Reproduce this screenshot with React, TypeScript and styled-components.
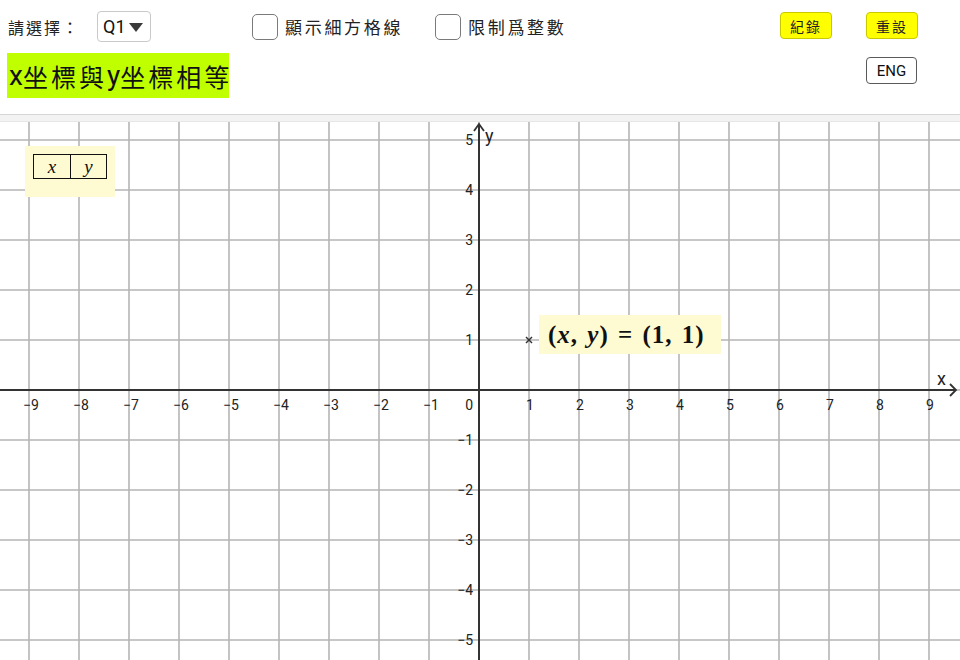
import React from "react";
import styled, { createGlobalStyle } from "styled-components";

const GlobalStyle = createGlobalStyle`
  html, body {
    margin: 0;
    padding: 0;
    background: #ffffff;
    overflow: hidden;
  }
  body {
    font-family: "Noto Sans CJK TC", "Noto Sans", sans-serif;
    color: #1a1a1a;
  }
`;

const CJK = `"Noto Sans CJK TC", "Noto Sans CJK SC", sans-serif`;
const LATIN = `Roboto, "Noto Sans", "Noto Sans CJK TC", sans-serif`;

const Page = styled.div`
  width: 960px;
  height: 660px;
  display: flex;
  flex-direction: column;
`;

const TopPanel = styled.div`
  height: 114px;
  box-sizing: border-box;
  padding-top: 11px;
  display: grid;
  grid-template-columns: 97px 155px 183px 345px 86px 1fr;
  grid-template-rows: 31px 45px;
  row-gap: 11px;
`;

const Label = styled.div`
  padding-left: 8px;
  display: flex;
  align-items: center;
  font-family: ${CJK};
  font-size: 16px;
  letter-spacing: 2px;
  color: #222;
`;

const Select = styled.div`
  width: 54px;
  height: 31px;
  box-sizing: border-box;
  border: 1px solid #c9c9c9;
  border-radius: 4px;
  display: flex;
  align-items: center;
  padding-left: 5px;
  gap: 3px;
  font-family: ${LATIN};
  font-size: 18px;
  color: #111;
`;

const Caret = styled.span`
  width: 0;
  height: 0;
  border-left: 7px solid transparent;
  border-right: 7px solid transparent;
  border-top: 9px solid #3a3a3a;
  margin-top: 2px;
`;

const CheckGroup = styled.label`
  display: flex;
  align-items: center;
  gap: 7px;
`;

const Box = styled.span`
  width: 26px;
  height: 26px;
  box-sizing: border-box;
  border: 1.5px solid #7a7a7a;
  border-radius: 5px;
  background: #fff;
`;

const CheckText = styled.span`
  font-family: ${CJK};
  font-size: 17px;
  letter-spacing: 2.7px;
  color: #222;
`;

const YellowButton = styled.button`
  align-self: start;
  margin-top: 1px;
  width: 52px;
  height: 27px;
  padding: 0;
  box-sizing: border-box;
  background: #ffff00;
  border: 1px solid #c9c900;
  border-radius: 4px;
  font-family: ${CJK};
  font-size: 14px;
  letter-spacing: 2px;
  color: #222;
`;

const Title = styled.div`
  grid-column: 1 / 5;
  justify-self: start;
  margin-left: 7px;
  height: 45px;
  width: 222px;
  box-sizing: border-box;
  padding-left: 2px;
  background: #c0ff00;
  display: flex;
  align-items: center;
  font-family: ${CJK};
  font-size: 25px;
  letter-spacing: 3px;
  color: #111;
  white-space: nowrap;
`;

const Var = styled.span`
  font-family: ${LATIN};
  font-size: 28px;
  letter-spacing: 0;
`;

const EngButton = styled.button`
  grid-column: 6;
  align-self: start;
  margin-top: 4px;
  width: 51px;
  height: 27px;
  padding: 0;
  box-sizing: border-box;
  background: #fff;
  border: 1.5px solid #5a5a5a;
  border-radius: 4px;
  font-family: ${LATIN};
  font-size: 15px;
  color: #111;
`;

const Divider = styled.div`
  height: 8px;
  box-sizing: border-box;
  border-top: 1px solid #d6d6d6;
  border-bottom: 1px solid #e6e6e6;
  background: #f3f3f3;
`;

const GraphArea = styled.div`
  position: relative;
  flex: 1;
  overflow: hidden;
`;

const NoteBox = styled.div<{ $left: number; $top: number }>`
  position: absolute;
  left: ${(p) => p.$left}px;
  top: ${(p) => p.$top}px;
  background: #fefbd2;
`;

const TableBox = styled(NoteBox)`
  width: 90px;
  height: 51px;
  box-sizing: border-box;
  padding: 8px 0 0 8px;
`;

const MiniTable = styled.table`
  border-collapse: collapse;
  td {
    border: 1px solid #111;
    height: 23px;
    padding: 0;
    text-align: center;
    font-family: "Liberation Serif", "DejaVu Serif", serif;
    font-style: italic;
    font-size: 19px;
    color: #111;
  }
`;

const Cell = styled.td<{ $w: number }>`
  width: ${(p) => p.$w}px;
`;

const PointLabel = styled(NoteBox)`
  width: 182px;
  height: 39px;
  box-sizing: border-box;
  padding-left: 9px;
  display: flex;
  align-items: center;
  font-family: "Liberation Serif", "DejaVu Serif", serif;
  font-weight: bold;
  font-size: 25px;
  letter-spacing: 1px;
  word-spacing: 2px;
  color: #111;
  white-space: pre;
`;

const MathVar = styled.i`
  font-style: italic;
`;

const OX = 479;
const OY = 268;
const U = 50;
const W = 960;
const H = 538;

const Graph: React.FC = () => {
  const xs: number[] = [];
  for (let k = -9; k <= 9; k++) xs.push(k);
  const ys: number[] = [];
  for (let k = -5; k <= 5; k++) ys.push(k);
  return (
    <svg width={W} height={H} style={{ display: "block" }}>
      {xs.map((k) => (
        <line
          key={"v" + k}
          x1={OX + k * U}
          x2={OX + k * U}
          y1={0}
          y2={H}
          stroke="#b5b5b5"
          strokeWidth={1.6}
        />
      ))}
      {ys.map((k) => (
        <line
          key={"h" + k}
          x1={0}
          x2={W}
          y1={OY - k * U}
          y2={OY - k * U}
          stroke="#b5b5b5"
          strokeWidth={1.6}
        />
      ))}
      <line x1={0} x2={955} y1={OY} y2={OY} stroke="#333" strokeWidth={2} />
      <line x1={OX} x2={OX} y1={2} y2={H} stroke="#333" strokeWidth={2} />
      <polyline
        points={`${OX - 5},9 ${OX},2 ${OX + 5},9`}
        fill="none"
        stroke="#333"
        strokeWidth={1.8}
      />
      <polyline
        points={`950,${OY - 6} 956,${OY} 950,${OY + 6}`}
        fill="none"
        stroke="#333"
        strokeWidth={1.8}
      />
      <g fontFamily="Roboto, 'Noto Sans', sans-serif" fontSize={14} fill="#222">
        {xs
          .filter((k) => k !== 0)
          .map((k) => (
            <text
              key={"tx" + k}
              x={OX + k * U + (k < 0 ? 2 : 1)}
              y={OY + 20}
              textAnchor="middle"
            >
              {k < 0 ? "\u2212" + -k : String(k)}
            </text>
          ))}
        {ys
          .filter((k) => k !== 0)
          .map((k) => (
            <text key={"ty" + k} x={OX - 6} y={OY - k * U + 5} textAnchor="end">
              {k < 0 ? "\u2212" + -k : String(k)}
            </text>
          ))}
        <text x={OX - 6} y={OY + 20} textAnchor="end">
          0
        </text>
        <text x={937} y={OY - 5} fontSize={18}>
          x
        </text>
        <text x={485} y={20} fontSize={18}>
          y
        </text>
      </g>
      <g stroke="#333" strokeWidth={1.4}>
        <line x1={OX + U - 3} y1={OY - U - 3} x2={OX + U + 3} y2={OY - U + 3} />
        <line x1={OX + U - 3} y1={OY - U + 3} x2={OX + U + 3} y2={OY - U - 3} />
      </g>
    </svg>
  );
};

const App: React.FC = () => {
  return (
    <Page>
      <GlobalStyle />
      <TopPanel>
        <Label>請選擇：</Label>
        <div>
          <Select>
            Q1
            <Caret />
          </Select>
        </div>
        <CheckGroup>
          <Box />
          <CheckText>顯示細方格線</CheckText>
        </CheckGroup>
        <CheckGroup>
          <Box />
          <CheckText>限制爲整數</CheckText>
        </CheckGroup>
        <YellowButton>紀錄</YellowButton>
        <YellowButton>重設</YellowButton>
        <Title>
          <Var>x</Var>坐標與<Var>y</Var>坐標相等
        </Title>
        <EngButton>ENG</EngButton>
      </TopPanel>
      <Divider />
      <GraphArea>
        <Graph />
        <TableBox $left={25} $top={24}>
          <MiniTable>
            <tbody>
              <tr>
                <Cell $w={36}>x</Cell>
                <Cell $w={35}>y</Cell>
              </tr>
            </tbody>
          </MiniTable>
        </TableBox>
        <PointLabel $left={539} $top={193}>
          (<MathVar>x</MathVar>, <MathVar>y</MathVar>) = (1, 1)
        </PointLabel>
      </GraphArea>
    </Page>
  );
};

export default App;
